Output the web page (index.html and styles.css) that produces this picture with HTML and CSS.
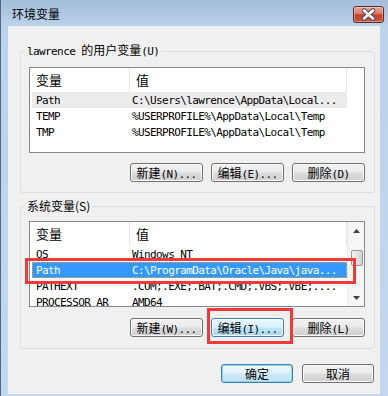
FILE: index.html
```html
<!DOCTYPE html>
<html lang="zh-CN">
<head>
    <meta charset="UTF-8">
    <meta name="viewport" content="width=device-width, initial-scale=1.0">
    <title>环境变量</title>
    <link rel="stylesheet" href="styles.css">
</head>
<body>
<div class="window">
    <!-- barra de título -->
    <div class="titlebar">
        <span class="title">环境变量</span>
        <button class="close">
            <svg width="29" height="15" viewBox="0 0 29 15">
                <path d="M10 3.5 L19 11.5 M19 3.5 L10 11.5" stroke="#4a4a5a" stroke-width="4.6" stroke-linecap="round"/>
                <path d="M10 3.5 L19 11.5 M19 3.5 L10 11.5" stroke="#ffffff" stroke-width="2.6" stroke-linecap="round"/>
            </svg>
        </button>
    </div>

    <div class="client">
        <!-- variáveis do usuário -->
        <fieldset class="group group-user">
            <legend><span class="m">lawrence </span>的用户变量<span class="m">(U)</span></legend>
            <div class="list">
                <div class="lv">
                    <div class="lv-head">
                        <div class="h-name">变量</div>
                        <div class="h-val">值</div>
                        <div class="h-rest"></div>
                    </div>
                    <div class="lv-body">
                        <div class="row sel-gray"><span class="c-name">Path</span><span class="c-val">C:\Users\lawrence\AppData\Local...</span></div>
                        <div class="row"><span class="c-name">TEMP</span><span class="c-val">%USERPROFILE%\AppData\Local\Temp</span></div>
                        <div class="row"><span class="c-name">TMP</span><span class="c-val">%USERPROFILE%\AppData\Local\Temp</span></div>
                    </div>
                </div>
            </div>
            <div class="btn-row">
                <button class="btn">新建<span class="m">(N)...</span></button>
                <button class="btn">编辑<span class="m">(E)...</span></button>
                <button class="btn">删除<span class="m">(D)</span></button>
            </div>
        </fieldset>

        <!-- variáveis do sistema -->
        <fieldset class="group group-sys">
            <legend>系统变量(S)</legend>
            <div class="list">
                <div class="lv">
                    <div class="lv-head">
                        <div class="h-name">变量</div>
                        <div class="h-val">值</div>
                    </div>
                    <div class="lv-body">
                        <div class="row"><span class="c-name">OS</span><span class="c-val">Windows_NT</span></div>
                        <div class="row sel-blue"><span class="c-name">Path</span><span class="c-val">C:\ProgramData\Oracle\Java\java...</span></div>
                        <div class="row"><span class="c-name">PATHEXT</span><span class="c-val">.COM;.EXE;.BAT;.CMD;.VBS;.VBE;....</span></div>
                        <div class="row"><span class="c-name">PROCESSOR_AR</span><span class="c-val">AMD64</span></div>
                    </div>
                </div>
                <div class="vscroll">
                    <div class="sb-btn">
                        <svg width="7" height="4" viewBox="0 0 7 4"><path d="M0 4 L3.5 0 L7 4 Z" fill="#404040"/></svg>
                    </div>
                    <div class="sb-track"><div class="sb-thumb"></div></div>
                    <div class="sb-btn">
                        <svg width="7" height="4" viewBox="0 0 7 4"><path d="M0 0 L7 0 L3.5 4 Z" fill="#404040"/></svg>
                    </div>
                </div>
            </div>
            <div class="btn-row">
                <button class="btn">新建<span class="m">(W)...</span></button>
                <button class="btn btn-hot">编辑<span class="m">(I)...</span></button>
                <button class="btn">删除<span class="m">(L)</span></button>
            </div>
        </fieldset>

        <div class="dlg-buttons">
            <button class="btn btn-default">确定</button>
            <button class="btn">取消</button>
        </div>
    </div>

    <!-- marcações vermelhas por cima -->
    <div class="mark mark-row"></div>
    <div class="mark mark-btn"></div>
</div>
</body>
</html>
```

FILE: styles.css
```css
* {
    box-sizing: border-box;
}

body {
    margin: 0;
    font-family: "Noto Sans CJK SC", "Noto Sans", sans-serif;
    font-size: 12px;
    color: #000;
    background: #fff;
}

/* janela */
.window {
    position: relative;
    width: 388px;
    height: 396px;
    display: flex;
    flex-direction: column;
    border-left: 1px solid #4f6a87;
    background: linear-gradient(#a4bdd9, #bad2ea 26px, #c3d8ee);
}

.titlebar {
    height: 26px;
    flex: none;
    display: flex;
    align-items: flex-start;
    padding-left: 11px;
}

.title {
    padding-top: 5px;
    line-height: 17px;
    font-size: 12px;
}

.close {
    margin: 6px 4px 0 auto;
    width: 31px;
    height: 17px;
    padding: 0;
    border: 1px solid #5b2a25;
    border-radius: 3px;
    background: linear-gradient(#e9aa9c, #d67865 45%, #c1412b 52%, #c9583e);
    box-shadow: inset 0 0 0 1px rgba(255, 255, 255, 0.35);
    display: flex;
    align-items: center;
    justify-content: center;
}

.client {
    flex: 1;
    margin: 0 8px 2px 7px;
    background: #f0f0f0;
    display: flex;
    flex-direction: column;
}

/* caixas de grupo */
.group {
    margin: 0 5px 0 12px;
    padding: 0 9px 10px 8px;
    border: 1px solid #d5dfe5;
    border-radius: 3px;
    min-width: 0;
}

.group-user {
    margin-top: 17px;
}

.group-sys {
    margin-top: 6px;
    padding-bottom: 11px;
}

.group legend {
    margin-left: -4px;
    padding: 0 2px;
    line-height: 14px;
    font-size: 12px;
}

.m {
    font-family: "DejaVu Sans Mono", "Liberation Mono", monospace;
    font-size: 11px;
    letter-spacing: -0.6px;
}

/* lista */
.list {
    margin-top: 8px;
    height: 86px;
    border: 1px solid #828790;
    background: #fff;
    display: flex;
    overflow: hidden;
}

.lv {
    flex: 1;
    min-width: 0;
    display: flex;
    flex-direction: column;
}

.lv-head {
    height: 24px;
    flex: none;
    display: flex;
}

.lv-head div {
    border-right: 1px solid #e5e5e5;
    font-size: 13px;
    line-height: 24px;
    padding-left: 6px;
}

.h-name {
    width: 100px;
}

.h-val {
    width: 217px;
}

.lv-head .h-rest {
    flex: 1;
    border-right: none;
}

.lv-body {
    flex: 1;
    overflow: hidden;
}

.row {
    height: 16px;
    width: 315px;
    margin-left: 2px;
    display: flex;
    align-items: center;
    white-space: nowrap;
    font-family: "DejaVu Sans Mono", "Liberation Mono", monospace;
    font-size: 11px;
    letter-spacing: -0.6px;
}

.c-name {
    width: 98px;
    padding-left: 4px;
}

.c-val {
    padding-left: 2px;
}

.sel-gray {
    background: #ececec;
}

.sel-blue {
    background: #3399ff;
    color: #fff;
    outline: 1px dotted #e8a040;
    outline-offset: -1px;
}

/* barra de rolagem */
.vscroll {
    width: 17px;
    flex: none;
    display: flex;
    flex-direction: column;
    background: #f6f6f6;
    border-left: 1px solid #ececec;
}

.sb-btn {
    height: 17px;
    flex: none;
    display: flex;
    align-items: center;
    justify-content: center;
}

.sb-track {
    flex: 1;
}

.sb-thumb {
    margin: 11px 1px 0 3px;
    height: 16px;
    border: 1px solid #979797;
    border-radius: 2px;
    background: linear-gradient(90deg, #f4f4f4, #e4e4e4 50%, #d2d2d2);
}

/* botões */
.btn-row {
    margin-top: 10px;
    display: flex;
    justify-content: flex-end;
    gap: 8px;
}

.group-sys .btn-row {
    margin-top: 11px;
}

.btn {
    width: 73px;
    height: 19px;
    padding: 0;
    border: 1px solid #707070;
    border-radius: 3px;
    background: linear-gradient(#f2f2f2, #ebebeb 48%, #dddddd 52%, #cfcfcf);
    box-shadow: inset 0 0 0 1px #fcfcfc;
    font-family: "Noto Sans CJK SC", sans-serif;
    font-size: 12px;
    line-height: 17px;
    color: #000;
}

.btn-hot {
    border-color: #3c7fb1;
    background: linear-gradient(#eaf6fd, #d9f0fc 48%, #bee6fd 52%, #a7d9f5);
}

.btn-default {
    border-color: #3c7fb1;
    box-shadow: inset 0 0 0 1px #8fd3f5;
    background: linear-gradient(#eef7fd, #e0f1fb 48%, #cfe9f8 52%, #c0e1f4);
}

.dlg-buttons {
    margin-top: 15px;
    padding-right: 6px;
    display: flex;
    justify-content: flex-end;
    gap: 9px;
}

.dlg-buttons .btn {
    width: 72px;
}

/* marcações */
.mark {
    position: absolute;
    border: 3px solid #f03a3a;
}

.mark-row {
    left: 24px;
    top: 258px;
    width: 331px;
    height: 26px;
}

.mark-btn {
    left: 206px;
    top: 308px;
    width: 86px;
    height: 36px;
}
```
